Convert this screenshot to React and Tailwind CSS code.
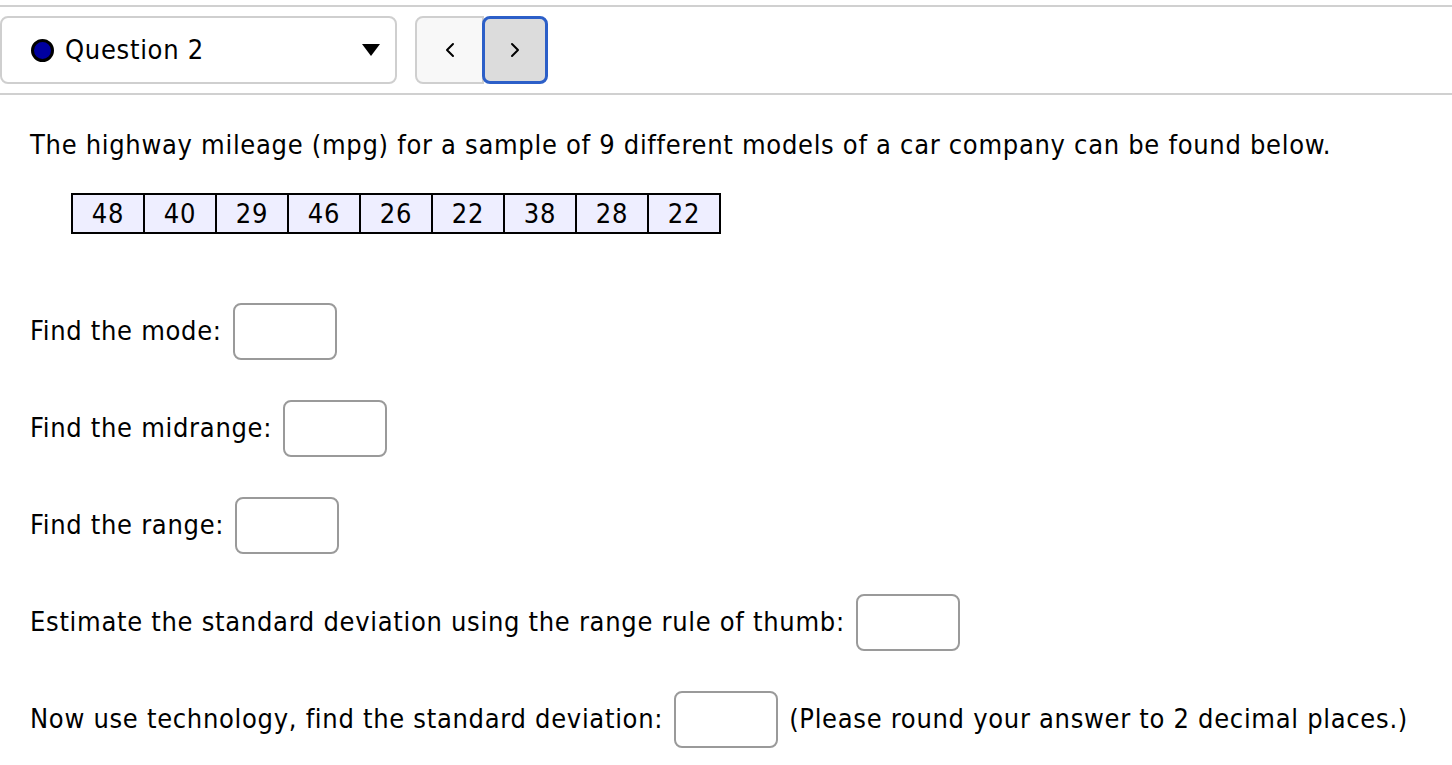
import { ChevronLeft, ChevronRight } from 'lucide-react'

const VALUES = [48, 40, 29, 46, 26, 22, 38, 28, 22]

function AnswerBox() {
  return <input type="text" className="w-[104px] h-[57px] rounded-[8px] border-2 border-[#9a9a9a] bg-white outline-none shrink-0" />
}

export default function App() {
  return (
    <div className="min-h-screen bg-white text-black text-[27px] tracking-[0.7px] font-['DejaVu_Sans_Condensed','Liberation_Sans',sans-serif]">
      {/* Question nav */}
      <div className="pt-[5px]">
        <div className="h-[2px] bg-[#d0d0d0]" />
        <div className="flex items-center gap-[18px] py-[9px]">
          <div className="w-[397px] h-[68px] rounded-[8px] border-2 border-[#cfcfcf] flex items-center pl-[29px] pr-[15px]">
            <span className="w-[23px] h-[23px] rounded-full bg-[#0000a0] border-[3px] border-black" />
            <span className="ml-[11px] flex-1">Question 2</span>
            <svg width="18" height="12" viewBox="0 0 18 12"><path d="M0 0 H18 L9 12 Z" fill="#000" /></svg>
          </div>
          <div className="flex h-[68px]">
            <button className="w-[69px] h-full bg-[#f8f8f8] border-2 border-[#cfcfcf] rounded-l-[8px] flex items-center justify-center">
              <ChevronLeft size={24} strokeWidth={2} />
            </button>
            <button className="w-[66px] h-full bg-[#dcdcdc] border-[3px] border-[#2c5fc8] rounded-[8px] -ml-[2px] flex items-center justify-center">
              <ChevronRight size={24} strokeWidth={2} />
            </button>
          </div>
        </div>
        <div className="h-[2px] bg-[#d0d0d0]" />
      </div>

      {/* Question body */}
      <div className="pl-[30px]">
        <p className="mt-[31px] leading-[38px]">
          The highway mileage (mpg) for a sample of 9 different models of a car company can be found below.
        </p>
        <table className="ml-[41px] mt-[29px] border-collapse">
          <tbody>
            <tr>
              {VALUES.map((v, i) => (
                <td key={i} className="w-[72px] h-[39px] border-2 border-black bg-[#eeeeff] text-center leading-none p-0">{v}</td>
              ))}
            </tr>
          </tbody>
        </table>

        <div className="mt-[69px] flex items-center gap-[11px]">
          <span>Find the mode:</span>
          <AnswerBox />
        </div>
        <div className="mt-[40px] flex items-center gap-[11px]">
          <span>Find the midrange:</span>
          <AnswerBox />
        </div>
        <div className="mt-[40px] flex items-center gap-[11px]">
          <span>Find the range:</span>
          <AnswerBox />
        </div>
        <div className="mt-[40px] flex items-center gap-[11px]">
          <span>Estimate the standard deviation using the range rule of thumb:</span>
          <AnswerBox />
        </div>
        <div className="mt-[40px] flex items-center gap-[11px]">
          <span>Now use technology, find the standard deviation:</span>
          <AnswerBox />
          <span>(Please round your answer to 2 decimal places.)</span>
        </div>
      </div>
    </div>
  )
}
